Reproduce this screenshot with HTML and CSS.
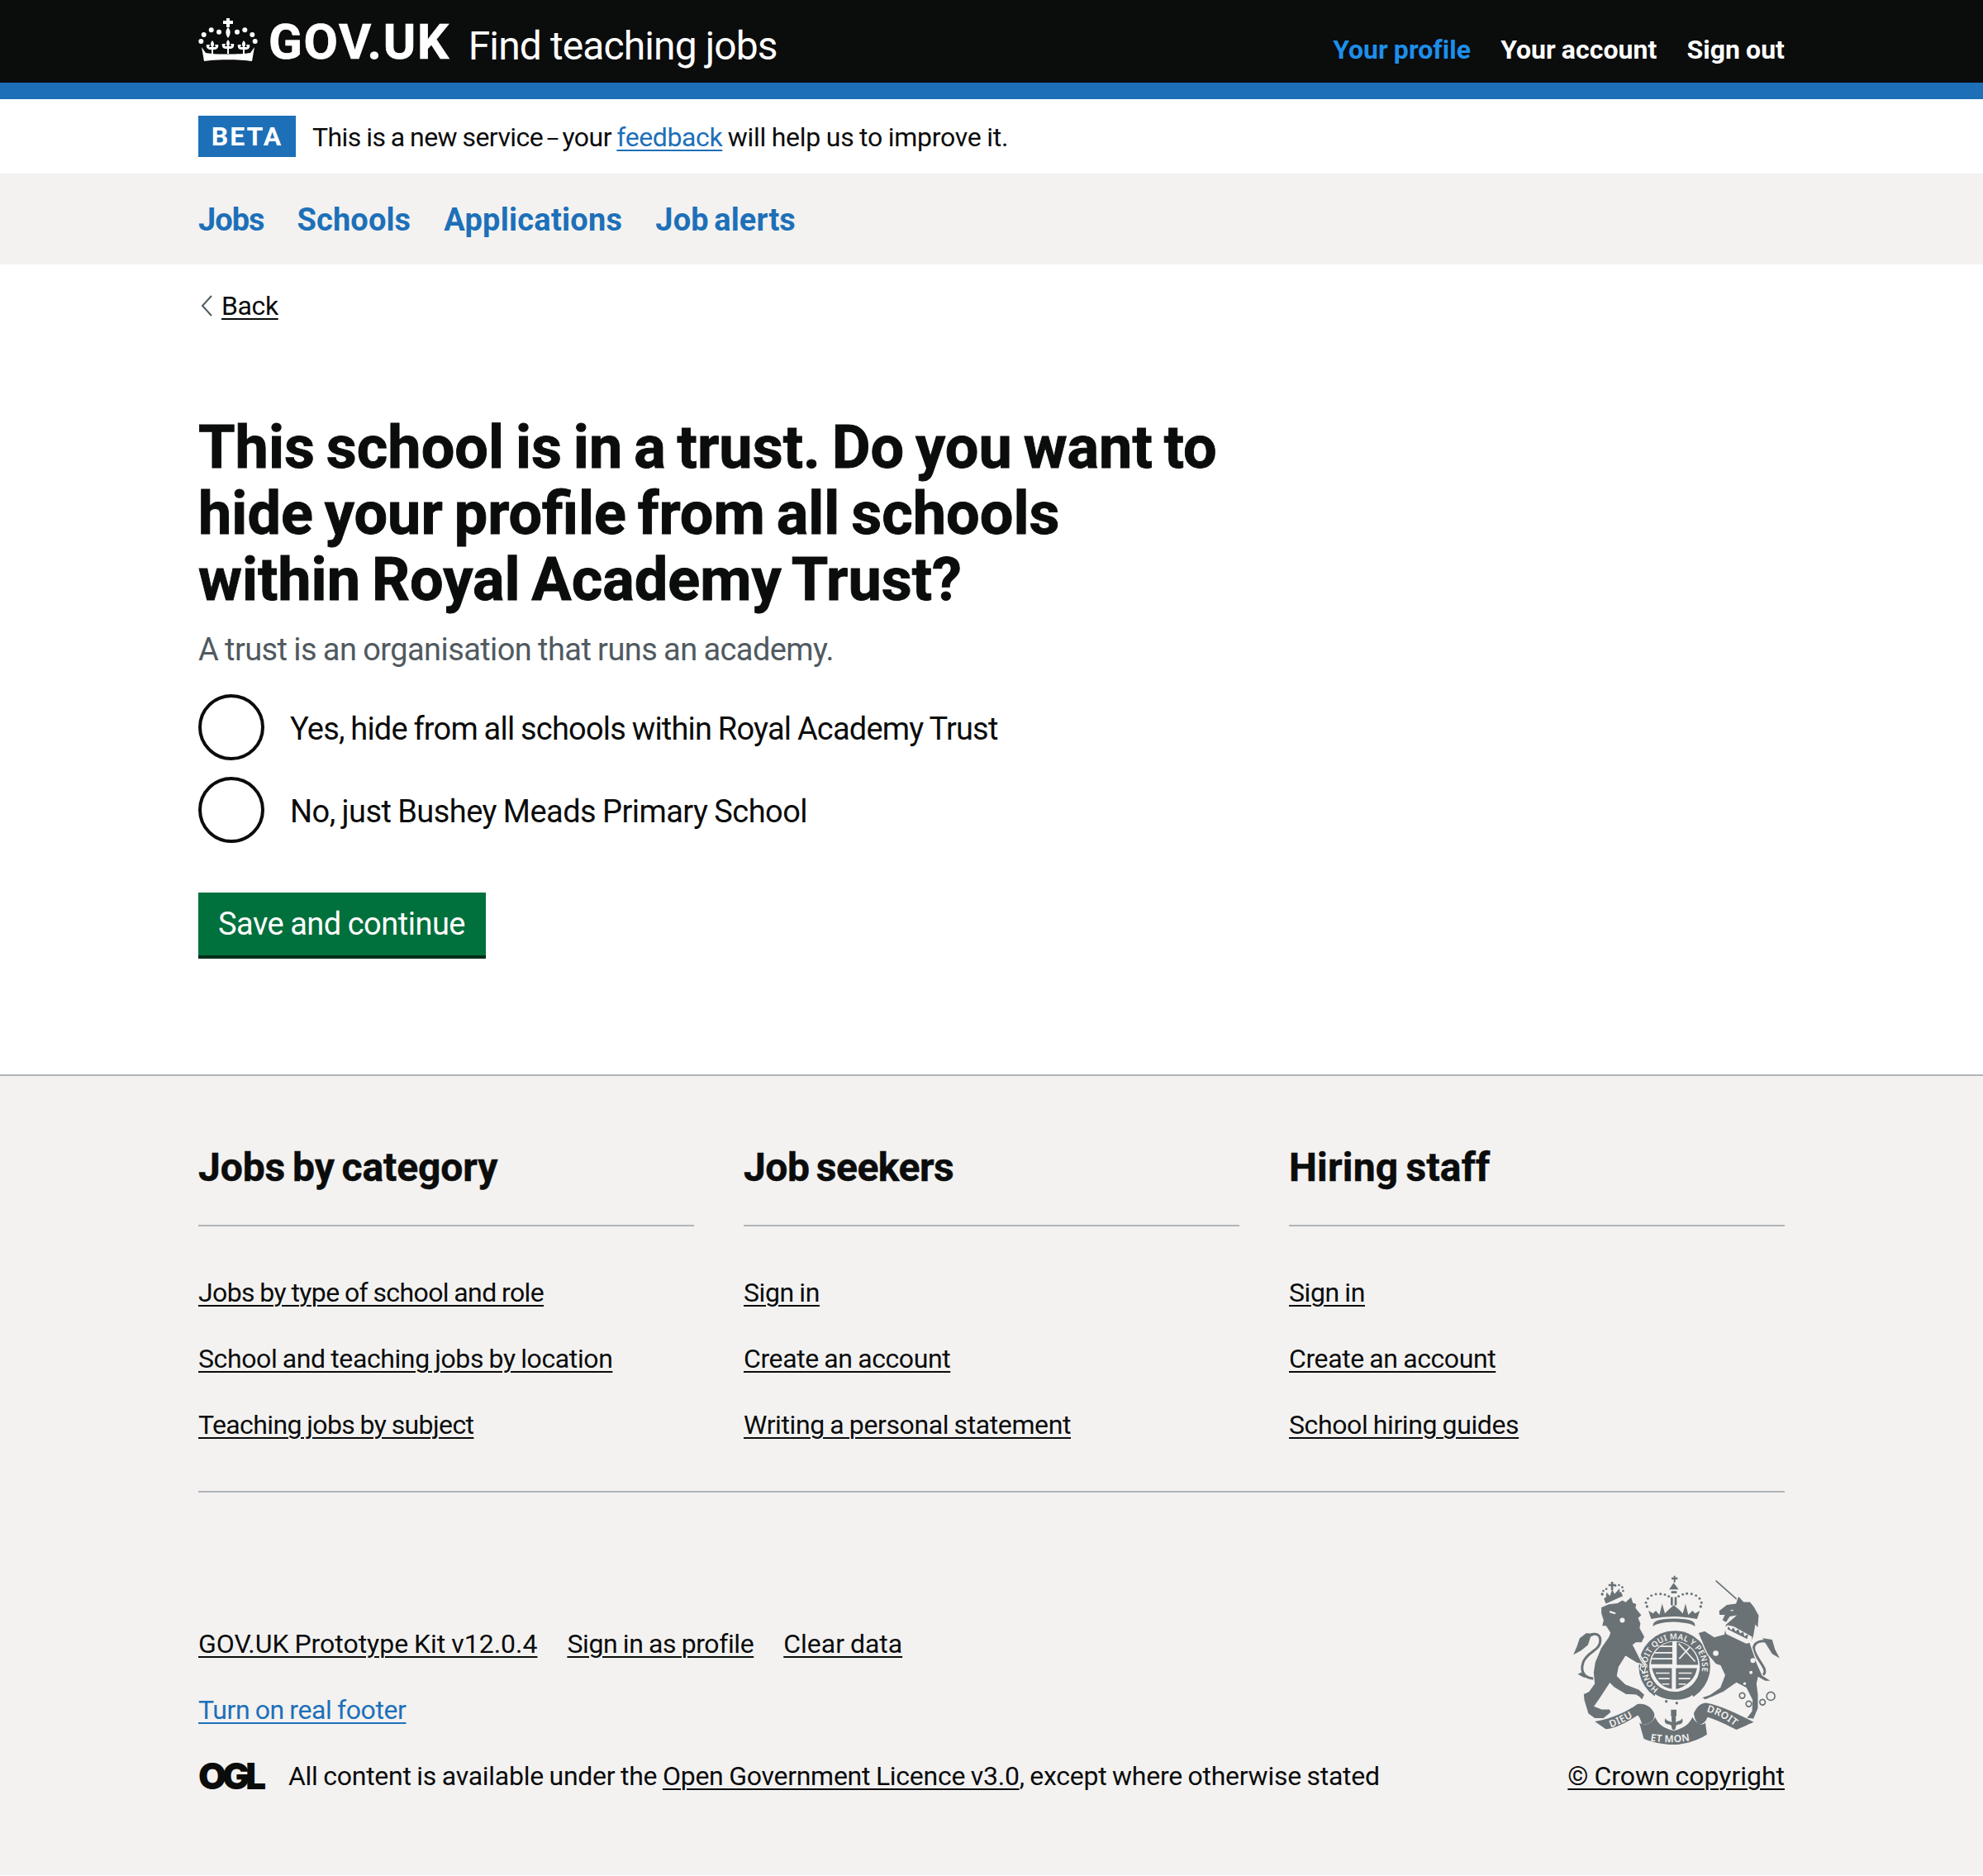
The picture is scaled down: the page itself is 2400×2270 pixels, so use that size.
FILE: index.html
```html
<!DOCTYPE html>
<html lang="en">
<head>
<meta charset="utf-8">
<title>Find teaching jobs</title>
<link rel="stylesheet" href="styles.css">
</head>
<body>
<header class="site-header">
  <div class="wrap site-header-row">
    <a class="brand" href="#">
      <svg class="crown" viewBox="0 0 72 52" aria-hidden="true">
        <defs>
          <path id="fleur" d="M0-9c2.500 3 2.500 5 1 8h3l-1-3 4 0c1 3-1 6-4 6H1v6h-2V2h-2c-3 0-5-3-4-6l4 0-1 3h3c-1.500-3-1.500-5 1-8z"/>
        </defs>
        <g fill="#fff">
          <path d="M34 0h4v3h4v4h-4v4h-4V7h-4V3h4z"/>
          <path d="M36 11c3.500 4 3.500 8 0 13-3.500-5-3.500-9 0-13z"/>
          <circle cx="3.300" cy="28" r="3"/><circle cx="6.700" cy="20" r="3"/><circle cx="15.700" cy="14.300" r="3"/><circle cx="25" cy="16.700" r="3"/>
          <circle cx="68.700" cy="28" r="3"/><circle cx="65.300" cy="20" r="3"/><circle cx="56.300" cy="14.300" r="3"/><circle cx="47" cy="16.700" r="3"/>
          <use href="#fleur" x="17" y="36"/><use href="#fleur" x="36" y="35"/><use href="#fleur" x="55" y="36"/>
          <path d="M4 35l5 7c12 2 42 2 54 0l5-7-3 17c-15-2.500-43-2.500-58 0z"/>
        </g>
      </svg>
      <span class="brand-name">GOV.UK</span>
      <span class="service-name">Find teaching jobs</span>
    </a>
    <nav class="account-nav">
      <a class="account-link is-active" href="#">Your profile</a>
      <a class="account-link" href="#">Your account</a>
      <a class="account-link" href="#">Sign out</a>
    </nav>
  </div>
</header>

<div class="wrap beta">
  <strong class="tag">BETA</strong>
  <span class="beta-text">This is a new service <span class="dash">–</span> your <a class="link-blue" href="#">feedback</a> <span class="beta-after">will help us to improve it.</span></span>
</div>

<nav class="main-nav">
  <div class="wrap main-nav-row">
    <a href="#">Jobs</a>
    <a href="#">Schools</a>
    <a href="#">Applications</a>
    <a href="#">Job alerts</a>
  </div>
</nav>

<main class="wrap main">
  <a class="back" href="#">
    <svg class="back-icon" viewBox="0 0 14 26" aria-hidden="true"><polyline points="13,1 2,13 13,25"/></svg>
    <span class="back-text">Back</span>
  </a>
  <h1>This school is in a trust. Do you want to hide your profile from all schools within Royal Academy Trust?</h1>
  <p class="hint">A trust is an organisation that runs an academy.</p>
  <div class="radios">
    <label class="radio"><span class="radio-mark"></span><span class="radio-label-yes">Yes, hide from all schools within Royal Academy Trust</span></label>
    <label class="radio"><span class="radio-mark"></span><span class="radio-label-no">No, just Bushey Meads Primary School</span></label>
  </div>
  <a class="button" href="#">Save and continue</a>
</main>

<footer class="footer">
  <div class="wrap">
    <div class="footer-cols">
      <section class="footer-col">
        <h2>Jobs by category</h2>
        <ul>
          <li><a class="tight" href="#">Jobs by type of school and role</a></li>
          <li><a href="#">School and teaching jobs by location</a></li>
          <li><a class="tight" href="#">Teaching jobs by subject</a></li>
        </ul>
      </section>
      <section class="footer-col">
        <h2 class="h2-narrow">Job seekers</h2>
        <ul>
          <li><a href="#">Sign in</a></li>
          <li><a href="#">Create an account</a></li>
          <li><a href="#">Writing a personal statement</a></li>
        </ul>
      </section>
      <section class="footer-col">
        <h2 class="h2-wide">Hiring staff</h2>
        <ul>
          <li><a href="#">Sign in</a></li>
          <li><a href="#">Create an account</a></li>
          <li><a href="#">School hiring guides</a></li>
        </ul>
      </section>
    </div>
    <div class="footer-meta">
      <div class="meta-left">
        <div class="meta-links">
          <a class="loose" href="#">GOV.UK Prototype Kit v12.0.4</a>
          <a href="#">Sign in as profile</a>
          <a class="loose" href="#">Clear data</a>
        </div>
        <div><a class="link-blue" href="#">Turn on real footer</a></div>
        <div class="licence">
          <span class="ogl">OGL</span>
          <span class="licence-text">All content is available under the <a href="#">Open Government Licence v3.0</a>, except where otherwise stated</span>
        </div>
      </div>
      <div class="meta-right">
        <svg class="crest" viewBox="60 70 780 640" aria-hidden="true">
          <defs>
            <path id="garter" d="M382 490A100 100 0 1 1 512 479"/>
            <path id="dieu" d="M208 630Q262 610 312 578"/>
            <path id="droit" d="M556 572Q612 586 664 630"/>
            <path id="etmon" d="M352 678Q437 692 526 672"/>
            <clipPath id="shieldClip"><circle cx="440" cy="404" r="86"/></clipPath>
          </defs>
          <g class="crest-fill">
            <!-- lion tail -->
            <path class="crest-line-thick" d="M150 452C115 452 95 430 108 392 125 350 172 352 170 310 168 285 140 285 118 300"/>
            <path d="M152 292L120 286 95 305 85 335 72 365 100 350 125 330 135 300zM100 430L88 436 110 448 135 450z"/>
            <!-- lion crown -->
            <path d="M183 160L245 136 252 152 190 180z"/>
            <path d="M200 108h9v-8h8v8h8v8h-8v14h-8v-14h-9z"/>
            <circle cx="177" cy="145" r="5"/><circle cx="181" cy="133" r="4"/><circle cx="192" cy="126" r="4"/>
            <circle cx="225" cy="114" r="4"/><circle cx="238" cy="112" r="4"/><circle cx="250" cy="120" r="4"/><circle cx="253" cy="133" r="4"/>
            <path d="M190 158L193 138 205 152 213 128 222 144 240 124 240 142z"/>
            <!-- central crown -->
            <path d="M429 84h8v-6h6v6h8v8h-8v10h-6V92h-8z"/>
            <path d="M420 128L437 104 455 128zM428 134h20v8h-20zM426 156h8v30h-8zM440 156h8v30h-8z"/>
            <circle cx="340" cy="190" r="5"/><circle cx="336" cy="176" r="4.500"/><circle cx="343" cy="161" r="4.500"/><circle cx="356" cy="150" r="4.500"/><circle cx="372" cy="145" r="4.500"/><circle cx="389" cy="144" r="4.500"/><circle cx="405" cy="147" r="4.500"/><circle cx="419" cy="153" r="4.500"/>
            <circle cx="535" cy="190" r="5"/><circle cx="538" cy="176" r="4.500"/><circle cx="531" cy="161" r="4.500"/><circle cx="518" cy="150" r="4.500"/><circle cx="502" cy="144" r="4.500"/><circle cx="485" cy="143" r="4.500"/><circle cx="470" cy="146" r="4.500"/><circle cx="455" cy="153" r="4.500"/>
            <path d="M355 235L345 205 362 215 372 205 385 220 395 180 405 215 420 200 437 185 455 200 470 215 480 180 490 220 505 205 515 215 532 205 522 235 Q437 218 355 235z"/>
            <path d="M362 262Q358 240 400 236 437 232 478 236 518 240 514 262 500 248 437 246 378 248 362 262z"/>
            <!-- garter -->
            <circle cx="440" cy="408" r="130"/>
            <!-- unicorn horn and tail -->
            <path class="crest-line" d="M590 96L668 165"/>
            <path class="crest-line-thick" d="M760 440C790 420 730 380 728 340 730 320 760 305 790 325"/>
            <path d="M760 305L795 310 805 345 822 378 795 362 778 335z"/>
          </g>
          <!-- lion and unicorn bodies, separated from the garter by a thin outline -->
          <path class="crest-beast" d="M172 192L200 180 232 176 250 165 262 172 283 153 290 175 303 180 300 195 322 222 310 232 318 252 315 268 332 300 322 322 300 322 290 330 318 385 335 410 330 432 315 418 318 400 300 395 262 372 238 410 232 442 262 472 310 490 332 510 322 532 312 520 300 512 262 510 220 485 205 470 172 520 150 552 175 562 205 562 210 575 182 598 150 598 125 580 110 530 108 508 128 498 148 470 144 430 150 392 172 340 200 300 205 285 190 262 175 262 180 240 172 215z"/>
          <path class="crest-beast" d="M600 205L630 182 662 178 672 150 692 172 715 172 730 190 748 222 744 272 735 260 728 300 716 325 740 395 760 440 795 462 770 462 745 448 740 470 745 510 745 560 728 600 700 596 720 570 722 530 700 486 665 468 620 500 580 518 550 530 538 520 568 510 605 484 622 440 606 405 590 400 560 365 548 340 525 285 550 278 585 300 620 290 625 255 660 225 642 228 628 250 612 240 620 222 602 222z"/>
          <g class="crest-fill">
            <!-- scrolls -->
            <path d="M150 608C215 598 270 570 305 545 330 540 355 552 366 578 372 598 352 622 322 618 316 600 312 590 306 585 265 612 225 632 190 636z"/>
            <path d="M312 612C330 625 355 618 370 592 378 612 392 630 437 642 482 630 496 612 505 592 520 618 540 625 552 612L558 655C520 680 470 692 437 692 400 692 350 682 328 670z"/>
            <path d="M510 578C520 555 535 540 555 540 610 550 670 580 728 610 700 622 680 632 665 638 630 620 590 600 560 592 555 605 545 618 530 618 518 612 512 595 510 578z"/>
            <!-- fleur -->
            <path d="M427 565h20v24h-20z"/>
            <path d="M437 575C425 590 430 605 430 612 425 605 408 608 408 596 400 605 405 620 420 618L428 622 431 636 437 640 443 636 446 622 454 618C469 620 474 605 466 596 466 608 449 605 444 612 444 605 449 590 437 575z"/>
          </g>
          <!-- cut-outs -->
          <g class="crest-bg">
            <path d="M632 258L622 268 628 290 700 325 718 322 722 300 655 262z"/>
            <circle cx="604" cy="278" r="10"/>
            <circle cx="590" cy="360" r="10"/>
            <circle cx="725" cy="386" r="9"/>
            <circle cx="718" cy="430" r="6"/>
            <circle cx="695" cy="470" r="5"/>
            <circle cx="250" cy="240" r="9"/>
            <path d="M205 205l22 8-4 5-20-6zM640 205l14-4-2 6z"/>
            <circle cx="440" cy="408" r="92"/>
            <path d="M370 508C395 530 470 540 505 512L512 530C470 560 395 555 365 528z"/>
          </g>
          <g class="crest-bg-line">
            <path d="M290 328L335 400M235 430l35 40M262 372l38 24"/>
          </g>
          <g class="crest-ring">
            <circle cx="686" cy="514" r="10"/><circle cx="710" cy="544" r="10"/><circle cx="760" cy="538" r="10"/><circle cx="790" cy="516" r="15"/>
          </g>
          <g class="crest-fill">
            <path d="M636 262l10 14 8-10 8 14 10-8 6 16 12-6 4 16 14-8-4 18-72-36z"/>
            <circle cx="410" cy="535" r="5"/><circle cx="448" cy="541" r="5"/>
          </g>
          <!-- shield -->
          <g clip-path="url(#shieldClip)">
            <g class="crest-fill">
              <path d="M350 310H432V400H350z"/>
              <path d="M448 310H530V402H448z"/>
              <path d="M358 414H430V492Q375 480 358 414z"/>
              <path d="M445 414H522Q512 470 445 492z"/>
            </g>
            <g class="crest-bg-line">
              <path d="M350 335h84M350 358h84M350 380h84M372 432h50M382 452h40M395 472h26"/>
              <path d="M455 432h48M455 452h42M455 472h26"/>
              <path d="M455 325l60 65M505 328l-48 52"/>
            </g>
          </g>
          <text class="crest-text crest-text-garter"><textPath href="#garter">HONI SOIT QUI MAL Y PENSE</textPath></text>
          <text class="crest-text crest-text-motto"><textPath href="#dieu">DIEU</textPath></text>
          <text class="crest-text crest-text-motto"><textPath href="#droit">DROIT</textPath></text>
          <text class="crest-text crest-text-motto"><textPath href="#etmon">ET MON</textPath></text>
        </svg>
        <a class="loose" href="#">© Crown copyright</a>
      </div>
    </div>
  </div>
</footer>
</body>
</html>
```
FILE: styles.css
```css
* { box-sizing: border-box; }
html, body { margin: 0; padding: 0; }
body {
  background: #fff;
  color: #0b0c0c;
  font-family: Roboto, "Noto Sans", sans-serif;
  font-size: 32px;
  line-height: 40px;
  letter-spacing: -.4px;
  word-spacing: -1px;
}
a {
  color: #0b0c0c;
  text-decoration: underline;
  text-decoration-thickness: 2px;
  text-underline-offset: 4px;
}
.wrap { width: 1920px; margin: 0 auto; }

.site-header { background: #0b0c0c; border-bottom: 20px solid #1d70b8; height: 120px; }
.site-header-row { display: flex; justify-content: space-between; height: 100px; }
.brand { display: flex; align-items: center; text-decoration: none; color: #fff; height: 100px; }
.crown { width: 72px; height: 52px; margin: -5px 13px 0 0; }
.brand-name { font-size: 60px; font-weight: 700; letter-spacing: 1.700px; margin-right: 22px; line-height: 100px; margin-top: 2px; -webkit-text-stroke: .7px #fff; }
.service-name { font-size: 48px; letter-spacing: -.9px; word-spacing: 0; line-height: 100px; margin-top: 11px; }
.account-nav { display: flex; gap: 36px; align-items: center; padding-top: 20px; }
.account-link { color: #fff; font-weight: 700; text-decoration: none; letter-spacing: .05px; }
.account-link.is-active { color: #1d8feb; }

.beta { display: flex; align-items: center; height: 90px; gap: 20px; }
.tag {
  background: #1d70b8; color: #fff;
  width: 118px; height: 50px;
  display: flex; align-items: center; justify-content: center;
  font-weight: 700; letter-spacing: 2px;
}
.beta-text { letter-spacing: -.55px; padding-top: 2px; }
.dash { font-size: 26px; line-height: 1; margin: 0 -3px; }
.beta-text .link-blue { letter-spacing: -.4px; }
.beta-after { letter-spacing: -.25px; }
.link-blue { color: #1d70b8; }

.main-nav { background: #f3f2f1; height: 110px; }
.main-nav-row { display: flex; align-items: center; gap: 40px; height: 110px; padding-top: 1px; }
.main-nav-row a { color: #1d70b8; font-size: 38px; font-weight: 700; text-decoration: none; letter-spacing: .1px; word-spacing: -3px; }
.main-nav-row a:first-child { letter-spacing: -1px; }
.main-nav-row a:nth-child(3) { letter-spacing: .25px; }

.main { padding: 30px 0 140px; }
.back { display: inline-flex; align-items: center; gap: 11px; padding-left: 3px; text-decoration: none; }
.back-icon { width: 14px; height: 26px; fill: none; stroke: #505a5f; stroke-width: 2; }
.back-text { text-decoration: underline; text-decoration-thickness: 2px; text-underline-offset: 4px; }
h1 {
  margin: 110px 0 18px;
  width: 1240px;
  font-size: 72px; line-height: 80px; font-weight: 700;
  letter-spacing: 0; word-spacing: -4px;
  -webkit-text-stroke: .9px #0b0c0c;
}
.hint { margin: 0 0 30px; padding-top: 1px; height: 50px; font-size: 38px; line-height: 50px; color: #505a5f; letter-spacing: -.58px; word-spacing: -1px; }
.radios { display: flex; flex-direction: column; gap: 20px; margin-bottom: 60px; }
.radio { display: flex; align-items: center; gap: 31px; font-size: 38px; line-height: 50px; word-spacing: -1px; }
.radio-label-yes { letter-spacing: -.8px; padding-top: 3px; }
.radio-label-no { letter-spacing: -.55px; padding-top: 3px; }
.radio-mark { width: 80px; height: 80px; border: 4px solid #0b0c0c; border-radius: 50%; flex: none; }
.button {
  display: inline-block;
  height: 80px; padding: 0 25px 0 24px;
  background: #00703c; color: #fff;
  box-shadow: inset 0 -4px 0 #002d18;
  font-size: 38px; line-height: 77px;
  text-decoration: none;
  letter-spacing: -.5px; word-spacing: -1px;
}

.footer { background: #f3f2f1; border-top: 2px solid #b1b4b6; padding: 84px 0 100px; }
.footer-cols { display: grid; grid-template-columns: repeat(3, 600px); gap: 60px; border-bottom: 2px solid #b1b4b6; padding-bottom: 60px; }
.footer-col h2 {
  margin: 0 0 60px; padding: 2px 0 44px;
  border-bottom: 2px solid #b1b4b6;
  font-size: 48px; line-height: 50px; font-weight: 700;
  letter-spacing: -.1px; word-spacing: -3px;
  -webkit-text-stroke: .5px #0b0c0c;
}
.footer-col .h2-narrow { letter-spacing: -.5px; }
.footer-col .h2-wide { letter-spacing: .2px; }
.footer-col ul { list-style: none; margin: 0; padding: 0; display: flex; flex-direction: column; gap: 40px; }
.tight { letter-spacing: -.6px; }
.loose { letter-spacing: -.02px; }

.footer-meta { display: flex; justify-content: space-between; align-items: flex-end; padding-top: 98px; }
.meta-left { display: flex; flex-direction: column; gap: 40px; }
.meta-links { display: flex; gap: 36px; }
.licence { display: flex; align-items: center; gap: 27px; }
.licence-text { letter-spacing: -.27px; }
.ogl { font-family: Inter, Roboto, sans-serif; font-weight: 900; font-size: 44px; letter-spacing: -5px; word-spacing: 0; width: 82px; color: #0b0c0c; }
.meta-right { display: flex; flex-direction: column; align-items: flex-end; gap: 12px; }
.crest { width: 260px; height: 213px; display: block; }
.crest-fill { fill: #6a7276; }
.crest-beast { fill: #6a7276; stroke: #f3f2f1; stroke-width: 4; }
.crest-bg { fill: #f3f2f1; }
.crest-ring { fill: none; stroke: #6a7276; stroke-width: 5; }
.crest-line { fill: none; stroke: #6a7276; stroke-width: 5; }
.crest-line-thick { fill: none; stroke: #6a7276; stroke-width: 9; }
.crest-bg-line { fill: none; stroke: #f3f2f1; stroke-width: 5; }
.crest-text { fill: #f3f2f1; font-family: "Noto Sans", Roboto, sans-serif; font-weight: 600; letter-spacing: 1px; }
.crest-text-garter { font-size: 29px; }
.crest-text-motto { font-size: 36px; }
```
